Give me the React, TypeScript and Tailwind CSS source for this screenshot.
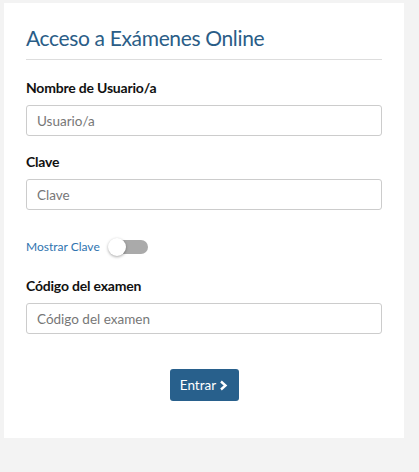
import { useState } from "react";

const Field = ({ label, placeholder, type = "text" }: { label: string; placeholder: string; type?: string }) => (
    <div>
        <label className="block text-[14px] font-bold leading-[20px] tracking-[-0.2px] text-[#111]">{label}</label>
        <input
            type={type}
            placeholder={placeholder}
            className="mt-[7px] block h-[31px] w-full rounded-[3px] border border-[#ccc] bg-white px-[10px] text-[13.5px] text-[#555] placeholder:text-[#777] outline-none"
        />
    </div>
);

export default function App() {
    const [show, setShow] = useState(false);

    return (
        <div className="min-h-[472px] bg-[#f3f3f3] pl-[4px] pt-[3px] font-['Lato',sans-serif]">
            <div className="w-[400px] bg-white px-[22px] pt-[22px] pb-[37px]">
                {/* Header */}
                <h1 className="text-[21px] leading-[26px] tracking-[-0.35px] text-[#2a5d87]">Acceso a Exámenes Online</h1>
                <hr className="mt-[8px] border-t border-[#ddd]" />

                <div className="mt-[18px]">
                    <Field label="Nombre de Usuario/a" placeholder="Usuario/a" />
                </div>
                <div className="mt-[16px]">
                    <Field label="Clave" placeholder="Clave" type={show ? "text" : "password"} />
                </div>

                {/* Toggle */}
                <div className="mt-[29px] flex items-center">
                    <span className="text-[12px] leading-[16px] text-[#2f74b0]">Mostrar Clave</span>
                    <button
                        onClick={() => setShow(!show)}
                        className="relative ml-[8px] h-[14px] w-[40px]"
                    >
                        <span className="absolute left-[5px] top-0 h-[14px] w-[35px] rounded-full bg-[#aaa]" />
                        <span
                            className={`absolute top-[-2px] h-[18px] w-[18px] rounded-full bg-white shadow-[0_1px_3px_rgba(0,0,0,0.35)] ${show ? "left-[22px]" : "left-0"}`}
                        />
                    </button>
                </div>

                <div className="mt-[21px]">
                    <Field label="Código del examen" placeholder="Código del examen" />
                </div>

                <div className="mt-[35px] flex justify-center">
                    <button className="flex h-[32px] w-[69px] items-center justify-center gap-[3px] rounded-[3px] bg-[#28608c] text-[13.5px] text-white">
                        Entrar
                        <svg width="9" height="11" viewBox="0 0 9 11" fill="none">
                            <path d="M2 1.5 L6.5 5.5 L2 9.5" stroke="white" strokeWidth="2.4" />
                        </svg>
                    </button>
                </div>
            </div>
        </div>
    );
}
